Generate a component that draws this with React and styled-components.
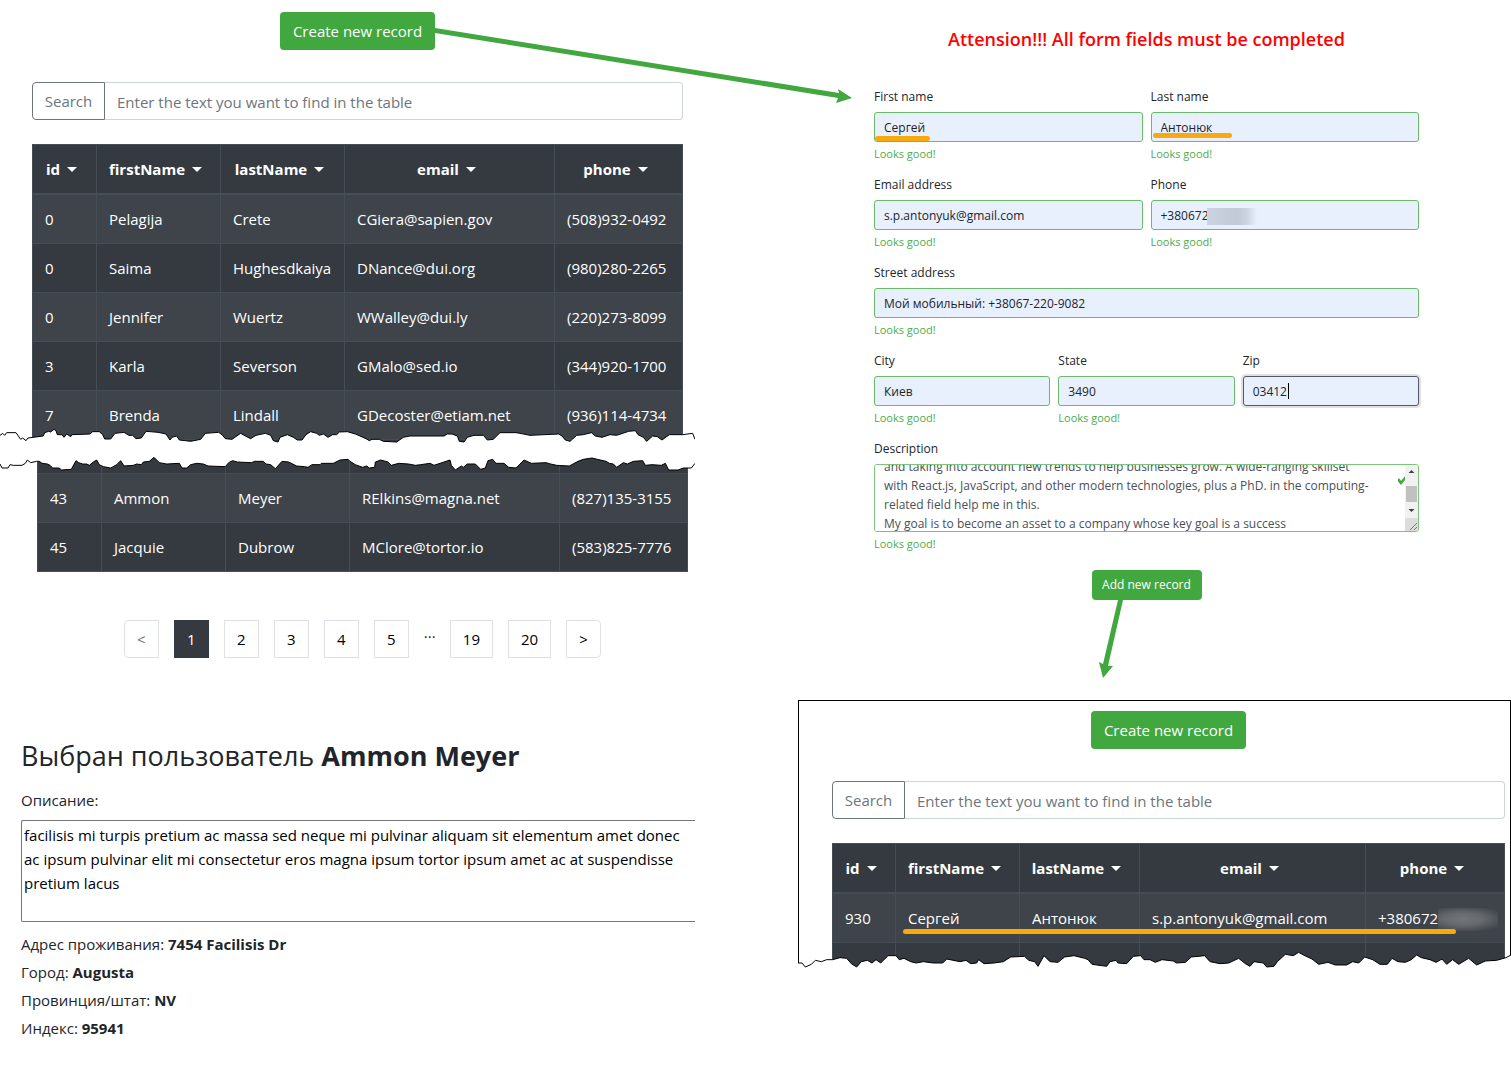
import React, { useEffect, useRef } from "react";
import styled, { createGlobalStyle, css } from "styled-components";

const green = "#41a73f";
const orange = "#f9a90b";

const GlobalStyle = createGlobalStyle`
  *, *::before, *::after { box-sizing: border-box; }
  body {
    margin: 0;
    background: #fff;
    color: #212529;
    font-family: "Open Sans", "Noto Sans", sans-serif;
    font-size: 15px;
    line-height: 24px;
  }
  button, input, textarea { font: inherit; margin: 0; }
`;

const Page = styled.main`
  position: relative;
  display: grid;
  grid-template-columns: minmax(0, 695fr) minmax(0, 816fr);
  align-items: start;
  overflow: hidden;
`;

const Column = styled.div`
  display: flex;
  flex-direction: column;
  min-width: 0;
`;

const ListArea = styled.section`
  display: flex;
  flex-direction: column;
  padding: ${(p) => p.$pad};
`;

const Button = styled.button`
  align-self: center;
  border: 0;
  border-radius: 4px;
  background: ${green};
  color: #fff;
  cursor: pointer;
  padding: ${(p) => (p.$small ? "0 10px" : "0 12px")};
  height: ${(p) => (p.$small ? "30px" : "38px")};
  min-width: ${(p) => (p.$small ? "110px" : "155px")};
  font-size: ${(p) => (p.$small ? "12px" : "15px")};
`;

const SearchBar = styled.form`
  display: flex;
  height: 38px;
  margin: 32px 0 24px;
`;

const SearchButton = styled.button`
  width: 73px;
  padding: 0;
  border: 1px solid #6c757d;
  border-radius: 4px 0 0 4px;
  background: #fff;
  color: #6c757d;
`;

const SearchInput = styled.input`
  flex: 1;
  min-width: 0;
  padding: 2px 12px 0;
  border: 1px solid #ced4da;
  border-left: 0;
  border-radius: 0 4px 4px 0;
  outline: 0;
  &::placeholder { color: #6c757d; opacity: 1; }
`;

const Table = styled.table`
  width: 100%;
  table-layout: fixed;
  border-collapse: collapse;
  background: #343a40;
  color: #fff;
`;

const Col = styled.col`
  width: ${(p) => (p.$w ? `${p.$w}px` : "auto")};
`;

const Th = styled.th`
  padding: 12px 6px 12px 0;
  border: 1px solid #454d55;
  border-bottom-width: 2px;
  text-align: center;
`;

const SortButton = styled.button`
  display: inline-flex;
  align-items: center;
  gap: 7px;
  padding: 0;
  border: 0;
  background: none;
  color: inherit;
  font-weight: 700;
  &::after {
    content: "";
    border: 5px solid transparent;
    border-top-color: #fff;
    border-bottom: 0;
  }
`;

const Row = styled.tr`
  background: ${(p) => (p.$light ? "#3e444a" : "#343a40")};
`;

const Td = styled.td`
  position: relative;
  padding: 12px;
  border: 1px solid #454d55;
  white-space: nowrap;
`;

const PartTd = styled.td`
  height: ${(p) => p.$h}px;
  padding: 0;
  border: 1px solid #454d55;
`;

const Tear = styled.svg`
  position: relative;
  display: block;
  width: 100%;
  height: ${(p) => p.$h}px;
  margin: ${(p) => p.$margin};
`;

const Pagination = styled.nav`
  display: flex;
  justify-content: center;
  gap: 15px;
  padding: 48px 7px 0 37px;
`;

const PageButton = styled.button`
  height: 38px;
  min-width: 35px;
  padding: 0 12px;
  border: 1px solid ${(p) => (p.$active ? "#343a40" : "#dee2e6")};
  border-radius: ${(p) => p.$radius || "0"};
  background: ${(p) => (p.$active ? "#343a40" : "#fff")};
  color: ${(p) => (p.$active ? "#fff" : p.disabled ? "#6c757d" : "#000")};
`;

const Ellipsis = styled.span`
  width: 11px;
  text-align: center;
`;

const Details = styled.section`
  padding: 80px 0 0 21px;
`;

const DetailsTitle = styled.h2`
  margin: 0;
  font-size: 27px;
  line-height: 36px;
  font-weight: 500;
  b { font-weight: 700; }
`;

const DetailsLabel = styled.label`
  display: block;
  margin: 14px 0 8px;
`;

const DetailsText = styled.textarea`
  display: block;
  width: 100%;
  height: 102px;
  margin-bottom: 10px;
  padding: 2px;
  border: 1px solid #767676;
  border-right: 0;
  border-radius: 2px 0 0 2px;
  outline: 0;
  resize: none;
  overflow: hidden;
  color: #000;
`;

const Fact = styled.p`
  margin: 0 0 4px;
`;

const FormArea = styled.form`
  display: flex;
  flex-direction: column;
  padding: 24px 92px 0 179px;
  font-size: 12px;
`;

const Warning = styled.h1`
  margin: 0 0 34px;
  color: #ff0000;
  font-size: 18px;
  line-height: 30px;
  font-weight: 600;
  text-align: center;
`;

const FieldRow = styled.div`
  display: grid;
  grid-auto-flow: column;
  grid-auto-columns: minmax(0, 1fr);
  gap: 8px;
  min-height: 88px;
`;

const FieldBox = styled.div`
  display: flex;
  flex-direction: column;
`;

const Label = styled.label`
  height: 24px;
  line-height: 18px;
`;

const Control = styled.div`
  position: relative;
  display: flex;
`;

const Input = styled.input`
  width: 100%;
  height: 30px;
  padding: 0 9px;
  border: 1px solid #69bb68;
  border-radius: 3px;
  outline: 0;
  background: #e8f0fe;
  color: #212529;
  ${(p) =>
    p.$focused &&
    css`
      border-color: #55586a;
      box-shadow: 0 0 0 2px rgba(0, 0, 0, 0.12);
    `}
`;

const Feedback = styled.small`
  margin-top: 3px;
  color: #4dac4b;
  font-size: 11px;
  line-height: 18px;
`;

const AboutBox = styled.div`
  display: flex;
  height: 68px;
  border: 1px solid #7dc47c;
  border-radius: 3px;
  overflow: hidden;
`;

const AboutText = styled.textarea`
  flex: 1;
  min-width: 0;
  padding: 0 9px;
  border: 0;
  outline: 0;
  resize: none;
  overflow: hidden;
  white-space: pre;
  color: #495057;
  line-height: 19px;
`;

const Marker = styled.span`
  position: absolute;
  left: ${(p) => p.$left}px;
  top: ${(p) => p.$top}px;
  width: ${(p) => p.$w};
  height: 5px;
  border-radius: 3px;
  background: ${orange};
`;

const Smudge = styled.span`
  position: absolute;
  top: ${(p) => p.$top}px;
  left: ${(p) => p.$left}px;
  width: ${(p) => p.$w}px;
  height: ${(p) => p.$h}px;
  background: ${(p) => p.$fill};
`;

const TextCursor = styled.span`
  position: absolute;
  left: 45px;
  top: 7px;
  width: 1px;
  height: 16px;
  background: #000;
`;

const SubmitRow = styled.div`
  display: flex;
  justify-content: center;
  padding-top: 17px;
`;

const Result = styled.section`
  margin: 100px 0 0 103px;
`;

const ResultPanel = styled.div`
  position: relative;
  border: 1px solid #000;
  border-bottom: 0;
`;

const Arrow = styled.svg`
  position: absolute;
  left: ${(p) => p.$left}px;
  top: ${(p) => p.$top}px;
  pointer-events: none;
`;

const columns = ["id", "firstName", "lastName", "email", "phone"];

const firstRows = [
  ["0", "Pelagija", "Crete", "CGiera@sapien.gov", "(508)932-0492"],
  ["0", "Saima", "Hughesdkaiya", "DNance@dui.org", "(980)280-2265"],
  ["0", "Jennifer", "Wuertz", "WWalley@dui.ly", "(220)273-8099"],
  ["3", "Karla", "Severson", "GMalo@sed.io", "(344)920-1700"],
  ["7", "Brenda", "Lindall", "GDecoster@etiam.net", "(936)114-4734"],
];

const lastRows = [
  ["43", "Ammon", "Meyer", "RElkins@magna.net", "(827)135-3155"],
  ["45", "Jacquie", "Dubrow", "MClore@tortor.io", "(583)825-7776"],
];

const newRows = [["930", "Сергей", "Антонюк", "s.p.antonyuk@gmail.com", "+380672"]];

const about = `and taking into account new trends to help businesses grow. A wide-ranging skillset
with React.js, JavaScript, and other modern technologies, plus a PhD. in the computing-
related field help me in this.
My goal is to become an asset to a company whose key goal is a success`;

const description =
  "facilisis mi turpis pretium ac massa sed neque mi pulvinar aliquam sit elementum amet donec ac ipsum pulvinar elit mi consectetur eros magna ipsum tortor ipsum amet ac at suspendisse pretium lacus";

const tearTop =
  "0,106 8,100 14,106 20,98 48,98 62,118 68,114 78,122 84,114 130,108 134,98 146,94 152,96 162,88 168,92 172,104 186,104 192,112 200,102 212,110 216,104 270,102 278,95 298,95 308,104 314,117 332,117 345,100 372,97 386,106 398,106 408,116 424,114 438,94 474,97 498,102 510,120 516,112 530,108 538,120 556,122 572,124 592,120 602,118 616,100 656,97 666,104 676,116 696,118 722,100 736,108 752,116 768,106 796,100 812,106 820,122 834,126 840,112 862,104 880,112 892,120 906,120 918,104 932,95 950,100 958,106 970,102 984,112 998,104 1010,104 1018,96 1042,95 1066,102 1080,108 1098,116 1108,122 1116,118 1138,118 1150,124 1190,126 1210,112 1230,108 1332,108 1342,102 1356,102 1372,108 1378,124 1392,126 1402,112 1422,106 1450,106 1462,120 1480,118 1500,98 1548,98 1560,100 1590,106 1676,102 1686,108 1696,120 1710,124 1730,106 1750,104 1774,98 1786,108 1806,112 1830,104 1850,106 1886,94 1906,92 1914,104 1930,112 1940,124 1958,108 1972,110 1986,120 2008,104 2048,104 2078,100 2085,118";
const tearBottom =
  "0,192 6,204 24,204 30,194 40,196 66,196 76,190 82,180 92,188 110,184 118,184 126,190 142,192 150,196 158,204 178,204 184,210 214,208 228,182 236,188 248,192 260,192 268,196 280,186 290,180 298,194 310,200 332,204 350,194 362,182 372,198 400,196 410,192 424,194 430,186 448,184 462,172 478,188 500,192 538,190 546,204 560,204 572,194 590,190 610,192 624,198 676,200 686,188 698,182 712,186 754,188 764,184 790,184 798,192 812,194 826,206 846,184 866,186 890,198 914,200 924,202 936,194 960,194 964,190 1000,190 1020,180 1044,178 1050,184 1066,194 1088,202 1100,198 1108,204 1124,202 1126,186 1142,180 1164,186 1174,196 1196,190 1226,192 1246,196 1262,194 1290,190 1302,196 1326,188 1350,180 1354,196 1366,210 1384,198 1390,202 1402,192 1426,192 1442,208 1456,204 1464,182 1478,178 1488,190 1512,190 1526,202 1548,204 1572,180 1594,190 1638,188 1652,192 1670,196 1708,198 1734,184 1750,178 1776,174 1792,178 1818,184 1828,190 1840,192 1850,202 1870,188 1882,192 1900,184 1928,182 1936,196 1956,194 1984,196 1996,190 2006,210 2034,210 2050,204 2074,204 2085,190";
const tearResult =
  "24,822 36,822 46,834 64,826 76,814 94,818 110,812 128,812 150,806 170,808 184,824 200,834 214,818 232,814 246,822 258,812 272,822 294,800 318,800 328,812 342,808 362,818 378,822 400,818 430,822 446,822 458,822 470,810 510,818 528,814 542,824 560,822 566,812 582,824 612,822 640,818 662,804 704,802 716,814 734,818 744,832 762,800 780,818 804,820 824,804 852,800 884,808 894,812 906,826 950,832 960,818 978,814 984,822 1010,824 1030,802 1052,800 1062,812 1080,812 1096,820 1116,812 1150,816 1160,822 1186,820 1204,804 1244,800 1260,818 1290,824 1316,822 1346,808 1366,824 1380,832 1392,818 1420,822 1430,834 1452,832 1462,818 1486,796 1510,800 1526,790 1540,798 1566,810 1586,826 1614,820 1636,828 1670,828 1688,818 1706,822 1724,804 1748,812 1770,826 1792,826 1806,808 1824,818 1846,820 1864,812 1880,798 1894,806 1920,812 1938,820 1956,810 1970,826 1988,812 2006,826 2036,808 2060,828 2086,816 2120,814 2148,806 2163,798";

const reversed = (points) => points.split(" ").reverse().join(" ");

function PartRow({ height }) {
  return (
    <Row aria-hidden="true">
      {columns.map((c) => (
        <PartTd key={c} $h={height} />
      ))}
    </Row>
  );
}

function RecordTable({ rows, widths, header = true, before, after, smudge }) {
  return (
    <Table>
      <colgroup>
        {widths.map((w, i) => (
          <Col key={i} $w={w} />
        ))}
      </colgroup>
      {header && (
        <thead>
          <tr>
            {columns.map((c) => (
              <Th key={c} scope="col">
                <SortButton type="button">{c}</SortButton>
              </Th>
            ))}
          </tr>
        </thead>
      )}
      <tbody>
        {before && <PartRow height={before} />}
        {rows.map((row, i) => (
          <Row key={i} $light={i % 2 === 0}>
            {row.map((cell, j) => (
              <Td key={j}>
                {cell}
                {smudge && j === 4 && (
                  <Smudge
                    $left={72}
                    $top={14}
                    $w={60}
                    $h={23}
                    $fill="radial-gradient(ellipse 72% 60% at 42% 48%, #72767b 0%, #666a6f 45%, #3e444a 100%)"
                  />
                )}
              </Td>
            ))}
          </Row>
        ))}
        {after && <PartRow height={after} />}
      </tbody>
    </Table>
  );
}

function ListHead() {
  return (
    <>
      <Button type="button">Create new record</Button>
      <SearchBar>
        <SearchButton type="button">Search</SearchButton>
        <SearchInput
          type="text"
          aria-label="Search text"
          placeholder="Enter the text you want to find in the table"
        />
      </SearchBar>
    </>
  );
}

function Field({ id, label, value, valid = true, children }) {
  return (
    <FieldBox>
      <Label htmlFor={id}>{label}</Label>
      <Control>
        <Input id={id} defaultValue={value} $focused={!valid} />
        {children}
      </Control>
      {valid && <Feedback>Looks good!</Feedback>}
    </FieldBox>
  );
}

function About() {
  const ref = useRef(null);
  useEffect(() => {
    ref.current.scrollTop = 8;
  }, []);
  return (
    <FieldBox>
      <Label htmlFor="about">Description</Label>
      <AboutBox>
        <AboutText id="about" ref={ref} defaultValue={about} />
        <svg width="20" height="66" viewBox="0 0 20 66" aria-hidden="true">
          <path d="M0 14 L3 18 L8 12" fill="none" stroke={green} strokeWidth="2.6" />
          <rect x="7" y="0" width="13" height="53" fill="#f1f1f1" />
          <rect x="8" y="21" width="11" height="16" fill="#c1c1c1" />
          <path d="M10.500 8 L13.500 5 L16.500 8 Z M10.500 44 L13.500 47 L16.500 44 Z" fill="#444" />
          <rect x="7" y="53" width="13" height="13" fill="#dcdcdc" />
          <path d="M12 65 L19 58 M16 65 L19 62" stroke="#777" />
        </svg>
      </AboutBox>
      <Feedback>Looks good!</Feedback>
    </FieldBox>
  );
}

function RecordForm() {
  return (
    <FormArea>
      <Warning>Attension!!! All form fields must be completed</Warning>
      <FieldRow>
        <Field id="first" label="First name" value="Сергей">
          <Marker $left={1} $top={24} $w="55px" />
        </Field>
        <Field id="last" label="Last name" value="Антонюк">
          <Marker $left={2} $top={21} $w="79px" />
        </Field>
      </FieldRow>
      <FieldRow>
        <Field id="email" label="Email address" value="s.p.antonyuk@gmail.com" />
        <Field id="phone" label="Phone" value="+380672">
          <Smudge
            $left={56}
            $top={8}
            $w={50}
            $h={17}
            $fill="linear-gradient(90deg, #cdd4e1 0%, #c2c9d6 60%, #cbd3e0 80%, #e8f0fe 100%)"
          />
        </Field>
      </FieldRow>
      <FieldRow>
        <Field id="street" label="Street address" value="Мой мобильный: +38067-220-9082" />
      </FieldRow>
      <FieldRow>
        <Field id="city" label="City" value="Киев" />
        <Field id="state" label="State" value="3490" />
        <Field id="zip" label="Zip" value="03412" valid={false}>
          <TextCursor />
        </Field>
      </FieldRow>
      <About />
      <SubmitRow>
        <Button type="button" $small>
          Add new record
        </Button>
      </SubmitRow>
    </FormArea>
  );
}

const pages = [
  { text: "<", disabled: true, radius: "4px 0 0 4px" },
  { text: "1", active: true },
  { text: "2" },
  { text: "3" },
  { text: "4" },
  { text: "5" },
  { gap: true },
  { text: "19" },
  { text: "20" },
  { text: ">", radius: "0 4px 4px 0" },
];

const facts = [
  ["Адрес проживания", "7454 Facilisis Dr"],
  ["Город", "Augusta"],
  ["Провинция/штат", "NV"],
  ["Индекс", "95941"],
];

export default function App() {
  return (
    <>
      <GlobalStyle />
      <Page>
        <Column>
          <ListArea $pad="12px 12px 0 32px">
            <ListHead />
            <RecordTable rows={firstRows} widths={[64, 124, 124, 210, null]} after={9} />
          </ListArea>
          <Tear
            $h={43}
            $margin="-21px 0 -14px"
            viewBox="0 84 2085 129"
            preserveAspectRatio="none"
            aria-hidden="true"
          >
            <polygon points={`${tearTop} ${reversed(tearBottom)}`} fill="#fff" />
            <polyline points={tearTop} fill="none" stroke="#000" strokeWidth="3" />
            <polyline points={tearBottom} fill="none" stroke="#000" strokeWidth="3" />
          </Tear>
          <ListArea $pad="0 7px 0 37px">
            <RecordTable
              rows={lastRows}
              widths={[64, 124, 124, 210, null]}
              header={false}
              before={16}
            />
          </ListArea>
          <Pagination aria-label="Pages">
            {pages.map((p, i) =>
              p.gap ? (
                <Ellipsis key={i}>...</Ellipsis>
              ) : (
                <PageButton
                  key={i}
                  type="button"
                  disabled={p.disabled}
                  $active={p.active}
                  $radius={p.radius}
                >
                  {p.text}
                </PageButton>
              )
            )}
          </Pagination>
          <Details>
            <DetailsTitle>
              Выбран пользователь <b>Ammon Meyer</b>
            </DetailsTitle>
            <DetailsLabel htmlFor="details">Описание:</DetailsLabel>
            <DetailsText id="details" defaultValue={description} />
            {facts.map(([name, value]) => (
              <Fact key={name}>
                {name}: <b>{value}</b>
              </Fact>
            ))}
          </Details>
        </Column>
        <Column>
          <RecordForm />
          <Result>
            <ResultPanel>
              <ListArea $pad="10px 5px 0 33px">
                <ListHead />
                <RecordTable
                  rows={newRows}
                  widths={[63, 124, 120, 226, null]}
                  after={24}
                  smudge
                />
              </ListArea>
              <Marker $left={104} $top={228} $w="calc(100% - 158px)" />
            </ResultPanel>
            <Tear
              $h={20}
              $margin="-18px 0 0"
              viewBox="24 780 2139 60"
              preserveAspectRatio="none"
              aria-hidden="true"
            >
              <polygon points={`${tearResult} 2163,840 24,840`} fill="#fff" />
              <polyline points={tearResult} fill="none" stroke="#000" strokeWidth="3" />
            </Tear>
          </Result>
        </Column>
        <Arrow $left={435} $top={24} width="420" height="84" viewBox="435 24 420 84" aria-hidden="true">
          <path d="M435 28 L839 93 L838 89 L852 98 L836 103 L838 98 L435 33 Z" fill={green} />
        </Arrow>
        <Arrow $left={1096} $top={600} width="30" height="80" viewBox="1096 600 30 80" aria-hidden="true">
          <path d="M1118 600 H1123 L1108 666 L1113 666 L1103 678 L1099 662 L1103 664 Z" fill={green} />
        </Arrow>
      </Page>
    </>
  );
}
